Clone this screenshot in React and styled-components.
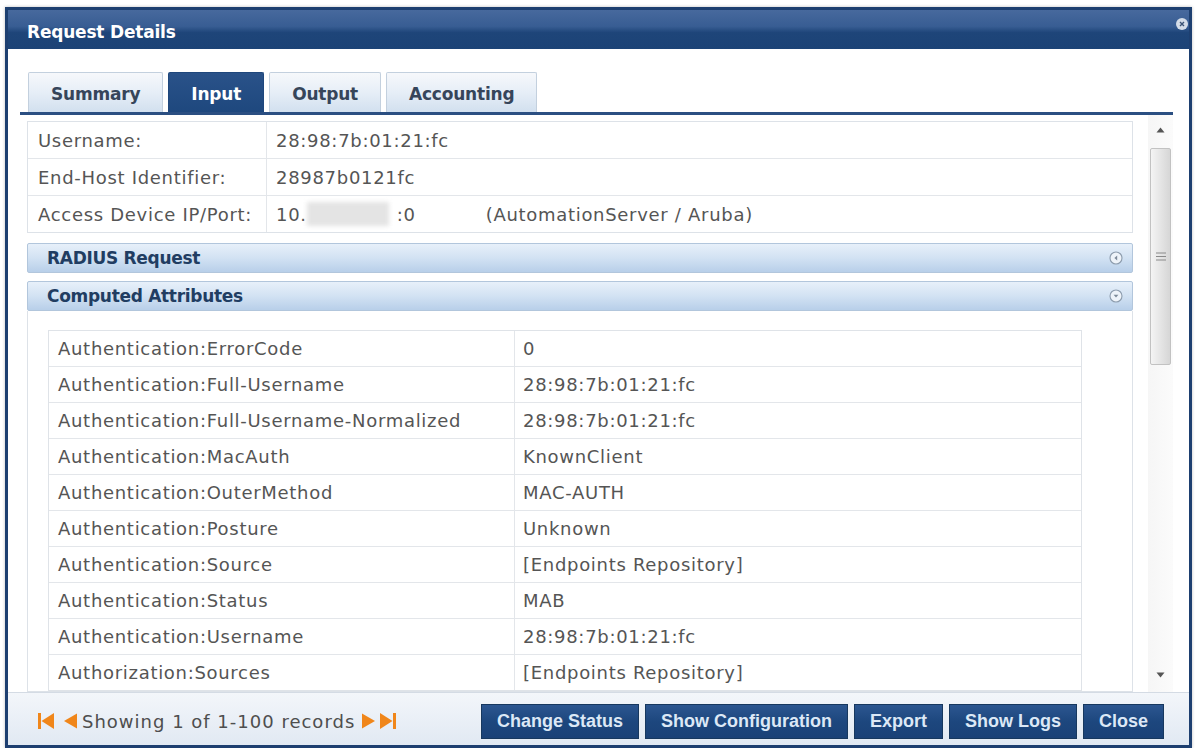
import React from "react";
import styled, { createGlobalStyle } from "styled-components";

const GlobalStyle = createGlobalStyle`
  html, body {
    margin: 0;
    padding: 0;
    background: #ffffff;
  }
  body {
    font-family: "DejaVu Sans", Verdana, sans-serif;
  }
`;

const Dialog = styled.div`
  box-sizing: border-box;
  margin: 7px 0 0 5px;
  width: 1187px;
  height: 741px;
  border: 3px solid #1d3f70;
  display: flex;
  flex-direction: column;
  background: #ffffff;
  box-shadow: 0 0 3px rgba(0, 0, 0, 0.25);
`;

const TitleBar = styled.div`
  height: 39px;
  flex: none;
  display: flex;
  align-items: center;
  padding: 0 2px 0 19px;
  background: linear-gradient(#47699d 0%, #385d93 42%, #1e4579 58%, #1c4376 100%);
  position: relative;
`;

const Title = styled.div`
  font-family: "DejaVu Sans", sans-serif;
  font-weight: bold;
  font-size: 17px;
  color: #ffffff;
  letter-spacing: -0.2px;
  margin-top: 4px;
`;

const CloseDot = styled.div`
  position: absolute;
  right: 1px;
  top: 8px;
  width: 12px;
  height: 12px;
  border-radius: 50%;
  background: #d5dde8;
  display: flex;
  align-items: center;
  justify-content: center;
`;

const Body = styled.div`
  flex: 1;
  display: flex;
  flex-direction: column;
  padding: 23px 16px 0 12px;
  min-height: 0;
`;

const TabRow = styled.div`
  display: flex;
  gap: 5px;
  padding-left: 8px;
  border-bottom: 3px solid #2b4f82;
  height: 40px;
  flex: none;
`;

const Tab = styled.div`
  box-sizing: border-box;
  height: 40px;
  padding: 2px 22px 0;
  display: flex;
  align-items: center;
  font-family: "DejaVu Sans", sans-serif;
  font-weight: bold;
  font-size: 17px;
  letter-spacing: -0.2px;
  border: 1px solid ${(p) => (p.$active ? "#1f477c" : "#c3d0de")};
  border-bottom: none;
  border-radius: 2px 2px 0 0;
  color: ${(p) => (p.$active ? "#ffffff" : "#36455a")};
  background: ${(p) =>
    p.$active
      ? "linear-gradient(#2a5289, #1e487e)"
      : "linear-gradient(#f6f8fb 0%, #e6eef7 50%, #d2e0ef 100%)"};
`;

const ScrollArea = styled.div`
  flex: 1;
  display: flex;
  min-height: 0;
  overflow: hidden;
`;

const Content = styled.div`
  flex: 1;
  padding: 6px 15px 0 7px;
  display: flex;
  flex-direction: column;
`;

const InfoTable = styled.div`
  border: 1px solid #dde2e8;
  display: flex;
  flex-direction: column;
`;

const InfoRow = styled.div`
  display: grid;
  grid-template-columns: 238px 1fr;
  height: 36px;
  border-top: ${(p) => (p.$first ? "none" : "1px solid #e3e6ea")};
`;

const Cell = styled.div`
  display: flex;
  align-items: center;
  padding-left: ${(p) => p.$pad || 10}px;
  font-size: 18px;
  letter-spacing: 0.7px;
  color: #555555;
  white-space: pre;
  border-left: ${(p) => (p.$divider ? "1px solid #e3e6ea" : "none")};
`;

const Blur = styled.span`
  display: inline-block;
  width: 82px;
  height: 24px;
  background: #e4e4e4;
  filter: blur(2px);
  margin-right: 8px;
`;

const Note = styled.span`
  margin-left: 70px;
`;

const SectionHeader = styled.div`
  margin-top: ${(p) => p.$mt}px;
  height: 30px;
  flex: none;
  box-sizing: border-box;
  display: flex;
  align-items: center;
  justify-content: space-between;
  padding: 0 9px 0 19px;
  border: 1px solid #b2c6dc;
  border-radius: 2px;
  background: linear-gradient(#e7f0fa 0%, #d2e2f3 50%, #b8cfe9 100%);
  font-weight: bold;
  font-size: 17px;
  letter-spacing: -0.3px;
  color: #213d62;
`;

const SectionBody = styled.div`
  border: 1px solid #dde2e8;
  border-top: none;
  padding: 19px 50px 0 20px;
`;

const AttrTable = styled.div`
  border: 1px solid #dfe3e8;
`;

const AttrRow = styled.div`
  display: grid;
  grid-template-columns: 465px 1fr;
  height: 35px;
  border-top: ${(p) => (p.$first ? "none" : "1px solid #e3e6ea")};
`;

const Scrollbar = styled.div`
  width: 25px;
  flex: none;
  display: flex;
  flex-direction: column;
  align-items: center;
  background: linear-gradient(90deg, #f6f6f6, #fbfbfb);
  padding: 12px 0 14px;
`;

const Thumb = styled.div`
  margin-top: 15px;
  width: 21px;
  height: 217px;
  box-sizing: border-box;
  border: 1px solid #c2c2c2;
  border-radius: 2px;
  background: linear-gradient(90deg, #f4f4f4, #e2e2e2 60%, #d6d6d6);
  display: flex;
  align-items: center;
  justify-content: center;
`;

const Track = styled.div`
  flex: 1;
`;

const Footer = styled.div`
  box-sizing: border-box;
  height: 53px;
  flex: none;
  border-top: 1px solid #d4dbe4;
  display: flex;
  align-items: center;
  justify-content: space-between;
  padding: 4px 25px 0 30px;
  background: linear-gradient(#f3f6fa, #e1e9f3);
`;

const Pager = styled.div`
  display: flex;
  align-items: center;
  gap: 3px;
  font-size: 18px;
  letter-spacing: 1px;
  color: #4e4e4e;
`;

const PagerText = styled.span`
  margin: 0 3px 0 1px;
`;

const IconGap = styled.span`
  width: 2px;
`;

const ButtonGroup = styled.div`
  display: flex;
  gap: 6px;
`;

const Button = styled.div`
  height: 35px;
  box-sizing: border-box;
  padding: 0 15px;
  display: flex;
  align-items: center;
  font-family: "Liberation Sans", Arial, sans-serif;
  font-weight: bold;
  font-size: 18px;
  color: #dce8f6;
  border: 1px solid #17385f;
  background: linear-gradient(#2c5690, #1d477e 50%, #1a4177);
`;

const Arrow = ({ dir }) => (
  <svg width="9" height="6" viewBox="0 0 9 6">
    <path d={dir === "up" ? "M0.5 5.5 L4.5 0.5 L8.5 5.5 Z" : "M0.5 0.5 L4.5 5.5 L8.5 0.5 Z"} fill="#555" />
  </svg>
);

const CircleIcon = ({ down }) => (
  <svg width="14" height="14" viewBox="0 0 14 14">
    <circle cx="7" cy="7" r="6" fill="#eef3f9" stroke="#8d9cad" strokeWidth="1.1" />
    <path d={down ? "M4.6 5.8 L9.4 5.8 L7 8.6 Z" : "M8.2 4.6 L8.2 9.4 L5.4 7 Z"} fill="#7d8a99" />
  </svg>
);

const PagerIcon = ({ kind }) => {
  const c = "#f0861a";
  if (kind === "first")
    return (
      <svg width="16" height="18" viewBox="0 0 16 18">
        <rect x="0" y="1" width="3" height="16" fill={c} />
        <path d="M16 1 L3.5 9 L16 17 Z" fill={c} />
      </svg>
    );
  if (kind === "prev")
    return (
      <svg width="16" height="18" viewBox="0 0 16 18">
        <path d="M15 1.5 L2 9 L15 16.5 Z" fill={c} />
      </svg>
    );
  if (kind === "next")
    return (
      <svg width="16" height="18" viewBox="0 0 16 18">
        <path d="M1 1.5 L14 9 L1 16.5 Z" fill={c} />
      </svg>
    );
  return (
    <svg width="16" height="18" viewBox="0 0 16 18">
      <path d="M0 1 L12.5 9 L0 17 Z" fill={c} />
      <rect x="13" y="1" width="3" height="16" fill={c} />
    </svg>
  );
};

const attributes = [
  ["Authentication:ErrorCode", "0"],
  ["Authentication:Full-Username", "28:98:7b:01:21:fc"],
  ["Authentication:Full-Username-Normalized", "28:98:7b:01:21:fc"],
  ["Authentication:MacAuth", "KnownClient"],
  ["Authentication:OuterMethod", "MAC-AUTH"],
  ["Authentication:Posture", "Unknown"],
  ["Authentication:Source", "[Endpoints Repository]"],
  ["Authentication:Status", "MAB"],
  ["Authentication:Username", "28:98:7b:01:21:fc"],
  ["Authorization:Sources", "[Endpoints Repository]"],
];

const tabs = ["Summary", "Input", "Output", "Accounting"];
const activeTab = "Input";

const buttons = ["Change Status", "Show Configuration", "Export", "Show Logs", "Close"];

export default function App() {
  return (
    <>
      <GlobalStyle />
      <Dialog>
        <TitleBar>
          <Title>Request Details</Title>
          <CloseDot>
            <svg width="6" height="6" viewBox="0 0 6 6">
              <path d="M1 1 L5 5 M5 1 L1 5" stroke="#3d5475" strokeWidth="1.4" />
            </svg>
          </CloseDot>
        </TitleBar>
        <Body>
          <TabRow>
            {tabs.map((t) => (
              <Tab key={t} $active={t === activeTab}>
                {t}
              </Tab>
            ))}
          </TabRow>
          <ScrollArea>
            <Content>
              <InfoTable>
                <InfoRow $first>
                  <Cell>Username:</Cell>
                  <Cell $divider $pad={9}>28:98:7b:01:21:fc</Cell>
                </InfoRow>
                <InfoRow>
                  <Cell>End-Host Identifier:</Cell>
                  <Cell $divider $pad={9}>28987b0121fc</Cell>
                </InfoRow>
                <InfoRow>
                  <Cell>Access Device IP/Port:</Cell>
                  <Cell $divider $pad={9}>
                    10.<Blur />:0<Note>(AutomationServer / Aruba)</Note>
                  </Cell>
                </InfoRow>
              </InfoTable>
              <SectionHeader $mt={10}>
                RADIUS Request
                <CircleIcon />
              </SectionHeader>
              <SectionHeader $mt={8}>
                Computed Attributes
                <CircleIcon down />
              </SectionHeader>
              <SectionBody>
                <AttrTable>
                  {attributes.map(([k, v], i) => (
                    <AttrRow key={k} $first={i === 0}>
                      <Cell $pad={9}>{k}</Cell>
                      <Cell $divider $pad={8}>{v}</Cell>
                    </AttrRow>
                  ))}
                </AttrTable>
              </SectionBody>
            </Content>
            <Scrollbar>
              <Arrow dir="up" />
              <Thumb>
                <svg width="10" height="9" viewBox="0 0 10 9">
                  <path d="M0 1 H10 M0 4.5 H10 M0 8 H10" stroke="#8a8a8a" strokeWidth="1" />
                </svg>
              </Thumb>
              <Track />
              <Arrow dir="down" />
            </Scrollbar>
          </ScrollArea>
        </Body>
        <Footer>
          <Pager>
            <PagerIcon kind="first" />
            <IconGap />
            <PagerIcon kind="prev" />
            <PagerText>Showing 1 of 1-100 records</PagerText>
            <PagerIcon kind="next" />
            <PagerIcon kind="last" />
          </Pager>
          <ButtonGroup>
            {buttons.map((b) => (
              <Button key={b}>{b}</Button>
            ))}
          </ButtonGroup>
        </Footer>
      </Dialog>
    </>
  );
}
